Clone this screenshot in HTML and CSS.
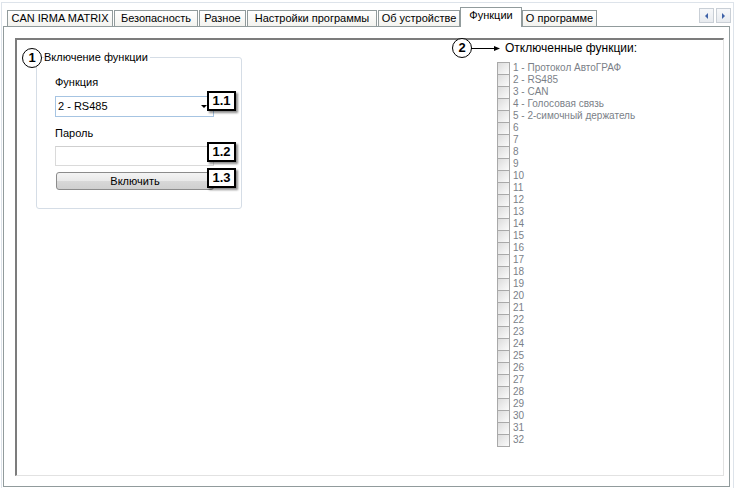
FILE: index.html
```html
<!DOCTYPE html>
<html lang="ru">
<head>
<meta charset="utf-8">
<title>Функции</title>
<link rel="stylesheet" href="styles.css">
</head>
<body>
<div class="outer">
  <div class="strip">
    <div class="tab">CAN IRMA MATRIX</div>
    <div class="tab">Безопасность</div>
    <div class="tab">Разное</div>
    <div class="tab">Настройки программы</div>
    <div class="tab">Об устройстве</div>
    <div class="tab active">Функции</div>
    <div class="tab">О программе</div>
    <div class="scrollbtns">
      <div class="sbtn"><span class="tri-left"></span></div>
      <div class="sbtn"><span class="tri-right"></span></div>
    </div>
  </div>
  <div class="page">
    <div class="frame">
      <div class="group">
        <span class="circle c1">1</span>
        <span class="legend">Включение функции</span>
        <div class="label first">Функция</div>
        <div class="combo">
          <span>2 - RS485</span>
          <span class="arrow"></span>
          <span class="callout">1.1</span>
        </div>
        <div class="label">Пароль</div>
        <div class="textbox">
          <span class="callout">1.2</span>
        </div>
        <div class="button">
          <span>Включить</span>
          <span class="callout">1.3</span>
        </div>
      </div>
      <div class="disabled">
        <div class="heading">
          <span class="circle c2">2</span>
          <svg class="arrowline" width="30" height="7" viewBox="0 0 30 7"><line x1="0" y1="3.5" x2="24" y2="3.5" stroke="#000" stroke-width="1"/><polygon points="23,1 29,3.5 23,6" fill="#000"/></svg>
          Отключенные функции:
        </div>
        <ul class="list">
          <li><span class="cb"></span>1 - Протокол АвтоГРАФ</li>
          <li><span class="cb"></span>2 - RS485</li>
          <li><span class="cb"></span>3 - CAN</li>
          <li><span class="cb"></span>4 - Голосовая связь</li>
          <li><span class="cb"></span>5 - 2-симочный держатель</li>
          <li><span class="cb"></span>6</li>
          <li><span class="cb"></span>7</li>
          <li><span class="cb"></span>8</li>
          <li><span class="cb"></span>9</li>
          <li><span class="cb"></span>10</li>
          <li><span class="cb"></span>11</li>
          <li><span class="cb"></span>12</li>
          <li><span class="cb"></span>13</li>
          <li><span class="cb"></span>14</li>
          <li><span class="cb"></span>15</li>
          <li><span class="cb"></span>16</li>
          <li><span class="cb"></span>17</li>
          <li><span class="cb"></span>18</li>
          <li><span class="cb"></span>19</li>
          <li><span class="cb"></span>20</li>
          <li><span class="cb"></span>21</li>
          <li><span class="cb"></span>22</li>
          <li><span class="cb"></span>23</li>
          <li><span class="cb"></span>24</li>
          <li><span class="cb"></span>25</li>
          <li><span class="cb"></span>26</li>
          <li><span class="cb"></span>27</li>
          <li><span class="cb"></span>28</li>
          <li><span class="cb"></span>29</li>
          <li><span class="cb"></span>30</li>
          <li><span class="cb"></span>31</li>
          <li><span class="cb"></span>32</li>
        </ul>
      </div>
    </div>
  </div>
</div>
</body>
</html>
```

FILE: styles.css
```css
html, body {
  margin: 0;
  padding: 0;
  background: #fff;
}
body {
  width: 737px;
  height: 488px;
  overflow: hidden;
  font-family: "Liberation Sans", Arial, sans-serif;
  font-size: 11px;
  color: #000;
}
.outer {
  box-sizing: border-box;
  margin: 2px 0 0 1px;
  width: 733px;
  height: 486px;
  border: 1px solid #dde3ea;
  border-bottom: none;
}
.strip {
  display: flex;
  align-items: flex-end;
  height: 23px;
  padding-left: 5px;
  position: relative;
  z-index: 2;
}
.tab {
  box-sizing: border-box;
  height: 16px;
  line-height: 15px;
  padding: 0;
  margin-right: 1px;
  border: 1px solid #919b9c;
  border-bottom: none;
  background: linear-gradient(#ffffff, #f3f3ef);
  white-space: nowrap;
  text-align: center;
  flex: none;
}
.tab:nth-child(1) { width: 106px; }
.tab:nth-child(2) { width: 84px; }
.tab:nth-child(3) { width: 47px; }
.tab:nth-child(4) { width: 130px; }
.tab:nth-child(5) { width: 82px; }
.tab:nth-child(6) { width: 62px; }
.tab:nth-child(7) { width: 75px; }
.tab.active {
  height: 20px;
  line-height: 14px;
  margin-bottom: -1px;
  margin-left: -1px;
  margin-right: 0;
  background: #fff;
}
.scrollbtns {
  display: flex;
  gap: 2px;
  margin-left: auto;
  margin-right: 2px;
  align-self: flex-start;
  margin-top: 5px;
}
.sbtn {
  box-sizing: border-box;
  width: 15px;
  height: 15px;
  border: 1px solid #c9cfd6;
  background: linear-gradient(#f7f8fa, #e8ebef);
  display: flex;
  align-items: center;
  justify-content: center;
}
.tri-left {
  width: 0; height: 0;
  border-top: 3px solid transparent;
  border-bottom: 3px solid transparent;
  border-right: 3px solid #3f62a8;
}
.tri-right {
  width: 0; height: 0;
  border-top: 3px solid transparent;
  border-bottom: 3px solid transparent;
  border-left: 3px solid #3f62a8;
}
.page {
  box-sizing: border-box;
  margin-left: 1px;
  width: 727px;
  height: 461px;
  border: 1px solid #919b9c;
  background: #fff;
  position: relative;
  z-index: 1;
}
.frame {
  box-sizing: border-box;
  margin: 11px 0 0 11px;
  width: 709px;
  height: 438px;
  border-top: 2px solid #7c7c7c;
  border-left: 2px solid #7c7c7c;
  border-right: 1px solid #e2e2e2;
  border-bottom: 1px solid #e2e2e2;
  display: flex;
  align-items: flex-start;
}
.group {
  box-sizing: border-box;
  position: relative;
  margin: 17px 0 0 19px;
  width: 206px;
  height: 152px;
  border: 1px solid #d5dde6;
  border-radius: 3px;
  padding: 0 0 0 18px;
}
.legend {
  position: absolute;
  left: 7px;
  top: -8px;
  background: #fff;
  padding-right: 2px;
  line-height: 14px;
}
.circle {
  position: absolute;
  box-sizing: border-box;
  width: 20px;
  height: 20px;
  border: 1.5px solid #000;
  border-radius: 50%;
  background: #fff;
  font-weight: bold;
  font-size: 13px;
  line-height: 17px;
  text-align: center;
}
.c1 {
  left: -15px;
  top: -10px;
  z-index: 2;
}
.label {
  line-height: 13px;
  margin-top: 10px;
}
.label.first {
  margin-top: 18px;
}
.combo {
  box-sizing: border-box;
  position: relative;
  width: 159px;
  height: 21px;
  margin-top: 7px;
  border: 1px solid #a6c4e2;
  line-height: 19px;
  padding-left: 2px;
}
.arrow {
  position: absolute;
  right: 6px;
  top: 8px;
  width: 0; height: 0;
  border-left: 3px solid transparent;
  border-right: 3px solid transparent;
  border-top: 3px solid #000;
}
.textbox {
  box-sizing: border-box;
  position: relative;
  width: 159px;
  height: 20px;
  margin-top: 6px;
  border: 1px solid #dadada;
  border-top-color: #cfcfcf;
}
.button {
  box-sizing: border-box;
  position: relative;
  width: 158px;
  height: 18px;
  margin: 6px 0 0 1px;
  border: 1px solid #8c8c8c;
  border-radius: 3px;
  background: linear-gradient(#f4f4f4 0%, #e9e9e9 50%, #d8d8d8 51%, #cfcfcf 100%);
  text-align: center;
  line-height: 16px;
}
.callout {
  position: absolute;
  box-sizing: border-box;
  width: 29px;
  height: 20px;
  border: 2px solid #000;
  background: #fff;
  font-weight: bold;
  font-size: 13px;
  line-height: 16px;
  text-align: center;
  box-shadow: 2px 2px 2px rgba(0, 0, 0, 0.45);
  z-index: 3;
}
.combo .callout { left: 151px; top: -6px; }
.textbox .callout { left: 151px; top: -5px; }
.button .callout { left: 150px; top: -5px; }
.disabled {
  margin: 1px 0 0 255px;
}
.heading {
  position: relative;
  padding-left: 8px;
  font-size: 12px;
  line-height: 14px;
}
.c2 {
  left: -45px;
  top: -3px;
}
.arrowline {
  position: absolute;
  left: -26px;
  top: 4px;
}
.list {
  list-style: none;
  margin: 7px 0 0 0;
  padding: 0;
  font-size: 10px;
  color: #7b7f88;
}
.list li {
  display: flex;
  align-items: center;
  height: 12px;
  line-height: 12px;
  white-space: nowrap;
}
.cb {
  box-sizing: border-box;
  width: 13px;
  height: 13px;
  margin-top: 1px;
  margin-right: 3px;
  border: 1px solid #a9a9a9;
  background: linear-gradient(135deg, #dcdcdc, #fbfbfb);
  flex: none;
}
```
